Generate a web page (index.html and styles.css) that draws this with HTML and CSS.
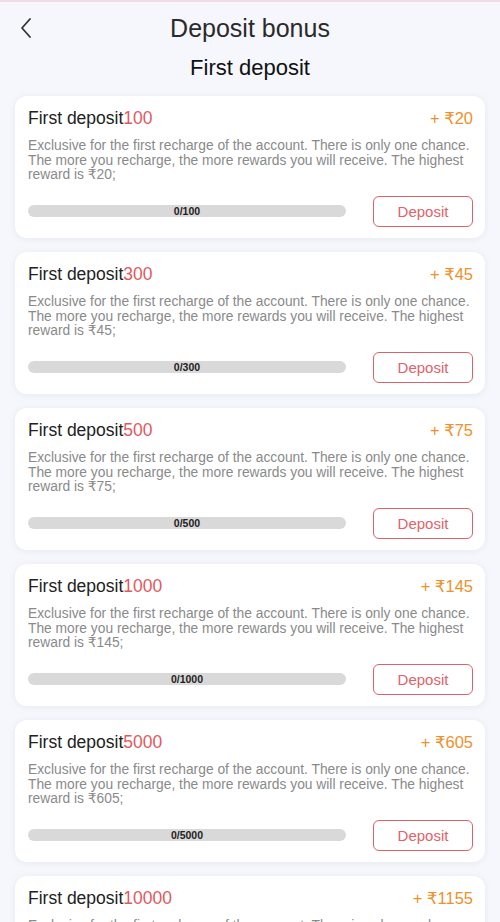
FILE: index.html
```html
<!DOCTYPE html>
<html>
<head>
<meta charset="utf-8">
<link rel="stylesheet" href="styles.css">
</head>
<body>
<div class="page">
  <header class="header">
    <svg class="back" width="14" height="22" viewBox="0 0 14 22"><path d="M11 2 L3 11 L11 20" fill="none" stroke="#333" stroke-width="1.8" stroke-linecap="round" stroke-linejoin="round"/></svg>
    <h1 class="title">Deposit bonus</h1>
  </header>
  <h2 class="subtitle">First deposit</h2>
  <div class="list">
    <div class="card">
      <div class="card-head"><span class="name">First deposit<em>100</em></span><span class="amount">+ ₹20</span></div>
      <p class="desc">Exclusive for the first recharge of the account. There is only one chance. The more you recharge, the more rewards you will receive. The highest reward is ₹20;</p>
      <div class="card-foot"><div class="bar"><span>0/100</span></div><button class="btn">Deposit</button></div>
    </div>
    <div class="card">
      <div class="card-head"><span class="name">First deposit<em>300</em></span><span class="amount">+ ₹45</span></div>
      <p class="desc">Exclusive for the first recharge of the account. There is only one chance. The more you recharge, the more rewards you will receive. The highest reward is ₹45;</p>
      <div class="card-foot"><div class="bar"><span>0/300</span></div><button class="btn">Deposit</button></div>
    </div>
    <div class="card">
      <div class="card-head"><span class="name">First deposit<em>500</em></span><span class="amount">+ ₹75</span></div>
      <p class="desc">Exclusive for the first recharge of the account. There is only one chance. The more you recharge, the more rewards you will receive. The highest reward is ₹75;</p>
      <div class="card-foot"><div class="bar"><span>0/500</span></div><button class="btn">Deposit</button></div>
    </div>
    <div class="card">
      <div class="card-head"><span class="name">First deposit<em>1000</em></span><span class="amount">+ ₹145</span></div>
      <p class="desc">Exclusive for the first recharge of the account. There is only one chance. The more you recharge, the more rewards you will receive. The highest reward is ₹145;</p>
      <div class="card-foot"><div class="bar"><span>0/1000</span></div><button class="btn">Deposit</button></div>
    </div>
    <div class="card">
      <div class="card-head"><span class="name">First deposit<em>5000</em></span><span class="amount">+ ₹605</span></div>
      <p class="desc">Exclusive for the first recharge of the account. There is only one chance. The more you recharge, the more rewards you will receive. The highest reward is ₹605;</p>
      <div class="card-foot"><div class="bar"><span>0/5000</span></div><button class="btn">Deposit</button></div>
    </div>
    <div class="card">
      <div class="card-head"><span class="name">First deposit<em>10000</em></span><span class="amount">+ ₹1155</span></div>
      <p class="desc">Exclusive for the first recharge of the account. There is only one chance. The more you recharge, the more rewards you will receive. The highest reward is ₹1155;</p>
      <div class="card-foot"><div class="bar"><span>0/10000</span></div><button class="btn">Deposit</button></div>
    </div>
  </div>
</div>
</body>
</html>
```
FILE: styles.css
```css
* { box-sizing: border-box; }
html, body { margin: 0; padding: 0; }
body {
  background: #f6f7fc;
  font-family: "Liberation Sans", Arial, "DejaVu Sans", sans-serif;
  color: #222;
}
.page {
  border-top: 2px solid #f2dbe3;
  padding: 0 15px;
}
.header {
  position: relative;
  height: 52px;
  display: flex;
  align-items: center;
  justify-content: center;
}
.back {
  position: absolute;
  left: 4px;
  top: 15px;
}
.title {
  margin: 0;
  font-size: 25px;
  font-weight: normal;
  color: #2a2a2a;
}
.subtitle {
  margin: 0;
  text-align: center;
  font-size: 22px;
  font-weight: normal;
  color: #111;
  line-height: 28px;
}
.list {
  margin-top: 14px;
  display: flex;
  flex-direction: column;
  gap: 14px;
}
.card {
  background: #fff;
  border-radius: 12px;
  padding: 11px 12px 11.5px 13px;
  box-shadow: 0 1px 6px rgba(200, 205, 225, 0.35);
}
.card-head {
  display: flex;
  justify-content: space-between;
  align-items: center;
  height: 22px;
}
.name {
  font-size: 17.5px;
  color: #222;
}
.name em {
  font-style: normal;
  color: #e05a5f;
}
.amount {
  font-size: 16.5px;
  color: #f0902a;
}
.desc {
  margin: 10px -6px 0 0;
  font-size: 13.8px;
  line-height: 14.5px;
  color: #8a8a8a;
}
.card-foot {
  margin-top: 13px;
  display: flex;
  align-items: center;
  gap: 27px;
}
.bar {
  flex: 1;
  height: 12px;
  border-radius: 6px;
  background: #d9d9d9;
  display: flex;
  align-items: center;
  justify-content: center;
}
.bar span {
  font-size: 10.5px;
  font-weight: bold;
  color: #222;
}
.btn {
  width: 100px;
  height: 31px;
  border: 1px solid #d8636b;
  border-radius: 6px;
  background: #fff;
  color: #e0626a;
  font-family: inherit;
  font-size: 15px;
  padding: 0;
}
```
